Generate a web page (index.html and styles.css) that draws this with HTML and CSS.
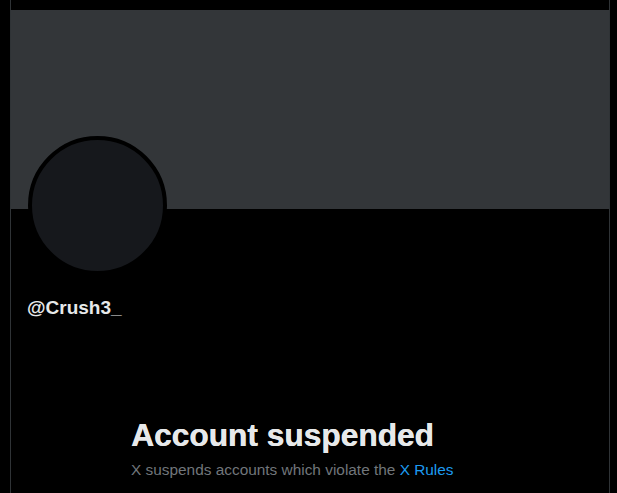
FILE: index.html
```html
<!DOCTYPE html>
<html lang="en">
<head>
    <meta charset="UTF-8">
    <meta name="viewport" content="width=device-width, initial-scale=1.0">
    <title>@Crush3_ / X</title>
    <link rel="stylesheet" href="styles.css">
</head>
<body>
    <main class="column">
        <div class="banner"></div>
        <div class="profile">
            <div class="avatar"></div>
            <div class="handle">@Crush3_</div>
        </div>
        <div class="empty">
            <h1 class="empty-title">Account suspended</h1>
            <p class="empty-text">X suspends accounts which violate the <a href="#">X Rules</a></p>
        </div>
    </main>
</body>
</html>
```

FILE: styles.css
```css
* {
    box-sizing: border-box;
    margin: 0;
    padding: 0;
}
body {
    background-color: #000;
    font-family: "Liberation Sans", Arial, sans-serif;
    color: #e7e9ea;
}
.column {
    width: 600px;
    min-height: 100vh;
    margin-left: 10px;
    padding-top: 10px;
    border-left: 1px solid #2f3336;
    border-right: 1px solid #2f3336;
}
.banner {
    height: 199px;
    background-color: #333639;
}
.profile {
    padding: 0 16px;
}
.avatar {
    width: 139px;
    height: 139px;
    margin: -73px 0 0 1px;
    border: 4px solid #000;
    border-radius: 50%;
    background-color: #16181c;
}
.handle {
    margin-top: 21px;
    font-size: 19px;
    line-height: 24px;
    font-weight: bold;
    color: #e7e9ea;
}
.empty {
    margin-top: 97px;
    padding-left: 120px;
}
.empty-title {
    font-size: 31.7px;
    line-height: 36px;
    font-weight: bold;
    text-shadow: 0.4px 0 0 #e7e9ea;
}
.empty-text {
    margin-top: 7px;
    font-size: 15.4px;
    line-height: 20px;
    color: #71767b;
}
.empty-text a {
    color: #1d9bf0;
    text-decoration: none;
}
```
